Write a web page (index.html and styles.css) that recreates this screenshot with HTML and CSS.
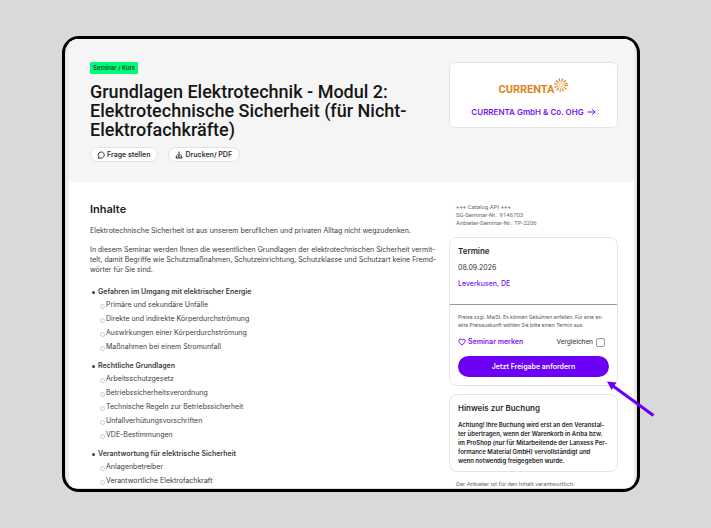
FILE: index.html
```html
<!DOCTYPE html>
<html lang="de">
<head>
<meta charset="utf-8">
<meta name="viewport" content="width=device-width, initial-scale=1">
<title>Grundlagen Elektrotechnik - Modul 2</title>
<link rel="stylesheet" href="styles.css">
</head>
<body>
<div class="stage">
  <div class="window">
    <div class="page">
      <header class="hero columns">
        <div class="intro">
          <span class="badge">Seminar / Kurs</span>
          <h1 class="title">Grundlagen Elektrotechnik - Modul 2:<br>Elektrotechnische Sicherheit (für Nicht-<br>Elektrofachkräfte)</h1>
          <div class="actions">
            <button class="pill" type="button">
              <svg class="icon" viewBox="0 0 16 16" aria-hidden="true"><path d="M3.4 11.2A6 6 0 1 1 8.500 14H2.200l1.200-1.500z"/></svg>
              Frage stellen
            </button>
            <button class="pill" type="button">
              <svg class="icon" viewBox="0 0 16 16" aria-hidden="true"><path d="M8 1v8M5 6.500l3 3 3-3M4.500 9.500H3L2 14h12l-1-4.500h-1.500M5 12h6"/></svg>
              Drucken/ PDF
            </button>
          </div>
        </div>
        <div class="provider">
          <div class="logo">
            <span class="logo-name">CURRENTA</span>
            <svg class="sun" viewBox="-14 -14 28 28" aria-hidden="true">
              <circle class="rays" r="10"/>
              <circle class="core" r="4"/>
            </svg>
          </div>
          <a class="provider-link" href="#anbieter">CURRENTA GmbH &amp; Co. OHG
            <svg class="arrow-right" viewBox="0 0 18 16" aria-hidden="true"><path d="M1 8h15M10.500 2.500L16 8l-5.500 5.500"/></svg>
          </a>
        </div>
      </header>

      <div class="body columns">
        <main class="content">
          <h2 class="heading">Inhalte</h2>
          <p class="text">Elektrotechnische Sicherheit ist aus unserem beruflichen und privaten Alltag nicht wegzudenken.</p>
          <p class="text">In diesem Seminar werden Ihnen die wesentlichen Grundlagen der elektrotechnischen Sicherheit vermit-<br>telt, damit Begriffe wie Schutzmaßnahmen, Schutzeinrichtung, Schutzklasse und Schutzart keine Fremd-<br>wörter für Sie sind.</p>
          <ul class="topics">
            <li><strong class="topic">Gefahren im Umgang mit elektrischer Energie</strong>
              <ul class="points">
                <li>Primäre und sekundäre Unfälle</li>
                <li>Direkte und indirekte Körperdurchströmung</li>
                <li>Auswirkungen einer Körperdurchströmung</li>
                <li>Maßnahmen bei einem Stromunfall</li>
              </ul>
            </li>
            <li><strong class="topic">Rechtliche Grundlagen</strong>
              <ul class="points">
                <li>Arbeitsschutzgesetz</li>
                <li>Betriebssicherheitsverordnung</li>
                <li>Technische Regeln zur Betriebssicherheit</li>
                <li>Unfallverhütungsvorschriften</li>
                <li>VDE-Bestimmungen</li>
              </ul>
            </li>
            <li><strong class="topic">Verantwortung für elektrische Sicherheit</strong>
              <ul class="points">
                <li>Anlagenbetreiber</li>
                <li>Verantwortliche Elektrofachkraft</li>
              </ul>
            </li>
          </ul>
        </main>

        <aside class="side">
          <p class="meta">+++ Catalog API +++<br>SG-Seminar-Nr.: 9146703<br>Anbieter-Seminar-Nr.: TP-2206</p>
          <section class="card">
            <div class="dates">
              <h3 class="card-title">Termine</h3>
              <p class="date">08.09.2026</p>
              <a class="place" href="#ort">Leverkusen, DE</a>
            </div>
            <div class="booking">
              <p class="price">Preise zzgl. MwSt. Es können Gebühren anfallen. Für eine ex-<br>akte Preisauskunft wählen Sie bitte einen Termin aus.</p>
              <div class="options">
                <button class="save" type="button">
                  <svg class="heart" viewBox="0 0 16 16" aria-hidden="true"><path d="M8 14C4 11 1.500 8.500 1.500 5.500 1.500 1.500 6.500 1 8 4.500 9.500 1 14.500 1.500 14.500 5.500 14.500 8.500 12 11 8 14z"/></svg>
                  Seminar merken
                </button>
                <label class="compare">Vergleichen <input class="check" type="checkbox"></label>
              </div>
              <button class="primary" type="button">Jetzt Freigabe anfordern</button>
            </div>
          </section>
          <section class="card notice">
            <h3 class="card-title">Hinweis zur Buchung</h3>
            <p class="notice-text">Achtung! Ihre Buchung wird erst an den Veranstal-<br>ter übertragen, wenn der Warenkorb in Ariba bzw.<br>im ProShop (nur für Mitarbeitende der Lanxess Per-<br>formance Material GmbH) vervollständigt und<br>wenn notwendig freigegeben wurde.</p>
          </section>
          <p class="meta">Der Anbieter ist für den Inhalt verantwortlich.</p>
        </aside>
      </div>
    </div>
  </div>
  <svg class="pointer" viewBox="0 0 48 36" aria-hidden="true"><path class="shaft" d="M46.500 34.500L6 5"/><path class="tip" d="M0 0.500L9.500 1.500 4.500 9z"/></svg>
</div>
</body>
</html>
```
FILE: styles.css
```css
* { box-sizing: border-box; }
body {
  margin: 0;
  background: #d9d9d9;
  font: 7px/10px Inter, "Liberation Sans", sans-serif;
  color: #3c3c3c;
}
h1, h2, h3, p, ul { margin: 0; padding: 0; }
ul { list-style: none; }
button { font: inherit; border: 0; cursor: pointer; white-space: nowrap; }
a { text-decoration: none; }

.stage {
  position: relative;
  height: 100vh;
  padding: 36px 71px 36px 62px;
}
.window {
  height: 100%;
  padding: 0 3px 1px 4px;
  overflow: hidden;
  border: 3px solid #000;
  border-radius: 17px;
  background: #f5f5f5;
  box-shadow: inset 0 0 3px #bbb;
}
.page {
  height: 100%;
  overflow: hidden;
  background: #fff;
  box-shadow: 0 0 2px #ddd;
}
.columns {
  display: grid;
  grid-template-columns: minmax(0, 1fr) 169px;
  column-gap: 16px;
  padding: 0 16px 0 21px;
}
.hero {
  align-items: start;
  padding-top: 23px;
  padding-bottom: 20px;
  background: #f5f5f5;
  border-radius: 0 0 4px 4px;
}
.badge {
  display: block;
  width: fit-content;
  padding: 0 3px;
  border-radius: 1px;
  background: #00fa78;
  color: #0c3a20;
  font: 500 6px/12px Inter, sans-serif;
}
.title {
  margin-top: 8px;
  color: #161616;
  font: 500 18px/19px Roboto, sans-serif;
  white-space: nowrap;
}
.actions { display: flex; gap: 10px; margin-top: 8px; }
.pill {
  display: flex;
  align-items: center;
  gap: 2px;
  height: 15px;
  padding: 0 7px 0 6px;
  border: 1px solid #e2e2e2;
  border-radius: 8px;
  background: #fff;
  color: #333;
  font-weight: 600;
}
.icon, .heart, .arrow-right {
  width: 8px;
  height: 8px;
  fill: none;
  stroke: currentColor;
  stroke-width: 2;
}
.provider {
  display: flex;
  flex-direction: column;
  align-items: center;
  gap: 9px;
  padding: 14px 0 9px;
  border: 1px solid #e4e4e4;
  border-radius: 6px;
  background: #fff;
}
.logo { display: flex; align-items: flex-start; color: #df821c; }
.logo-name {
  padding-top: 6px;
  font: 700 11px/14px Roboto, sans-serif;
}
.sun { width: 14px; height: 14px; margin-top: 1px; fill: none; stroke: currentColor; }
.rays { stroke-width: 7; stroke-dasharray: 2.3 2.933; }
.core { stroke-width: 2; stroke-dasharray: 1 1; }
.provider-link {
  display: flex;
  align-items: center;
  gap: 3px;
  color: #7a12f5;
  font: 600 8px/12px Inter, sans-serif;
  white-space: nowrap;
}
.arrow-right { width: 9px; }

.body { padding-top: 21px; }
.heading {
  margin-bottom: 11px;
  color: #222;
  font: 600 11px/12px Inter, sans-serif;
}
.text + .text { margin-top: 9px; }
.text { white-space: nowrap; }
.topics { margin-top: 11px; padding-left: 8px; white-space: nowrap; }
.topics > li + li { margin-top: 6px; }
.topic { display: block; position: relative; font-weight: 600; line-height: 12px; }
.topic::before {
  content: "";
  position: absolute;
  left: -6px;
  top: 5px;
  width: 3px;
  height: 3px;
  border-radius: 50%;
  background: #444;
}
.points { padding-left: 8px; line-height: 14px; }
.points li { position: relative; }
.points li::before {
  content: "";
  position: absolute;
  left: -6px;
  top: 6px;
  width: 3px;
  height: 3px;
  border: 1px solid #ccc;
  border-radius: 50%;
}

.meta {
  padding: 0 7px;
  color: #6c6c6c;
  font: 6px/8px Roboto, sans-serif;
  white-space: nowrap;
}
.meta + .card { margin-top: 10px; }
.card {
  margin-bottom: 8px;
  border: 1px solid #e4e4e4;
  border-radius: 8px;
}
.dates { padding: 7px 8px 15px; }
.card-title {
  color: #2b2b2b;
  font: 600 8px/12px Inter, sans-serif;
}
.date { margin-top: 6px; color: #333; line-height: 10px; }
.place { display: block; margin-top: 6px; color: #7a12f5; font-weight: 500; line-height: 10px; }
.booking { padding: 8px; border-top: 1px solid #999; }
.price { color: #555; font-size: 5px; line-height: 8px; white-space: nowrap; }
.options { display: flex; align-items: center; justify-content: space-between; margin: 8px 4px 9px 0; }
.save {
  display: flex;
  align-items: center;
  gap: 2px;
  padding: 0;
  background: none;
  color: #7a12f5;
  font-weight: 600;
}
.compare { display: flex; align-items: center; gap: 3px; color: #333; font-family: Roboto, sans-serif; }
.check {
  appearance: none;
  width: 9px;
  height: 9px;
  margin: 0;
  border: 1px solid #999;
  border-radius: 2px;
  background: #fff;
}
.primary {
  width: 100%;
  height: 21px;
  border-radius: 11px;
  background: #6b00f5;
  color: #fff;
  font-weight: 600;
}
.notice { padding: 7px 8px 6px; }
.notice-text {
  margin-top: 6px;
  color: #222;
  font: 600 6px/9px Inter, sans-serif;
  white-space: nowrap;
}
.pointer {
  position: absolute;
  top: 381px;
  right: 56px;
  width: 48px;
  height: 36px;
}
.shaft { fill: none; stroke: #6b00f5; stroke-width: 3; }
.tip { fill: #6b00f5; }
```
